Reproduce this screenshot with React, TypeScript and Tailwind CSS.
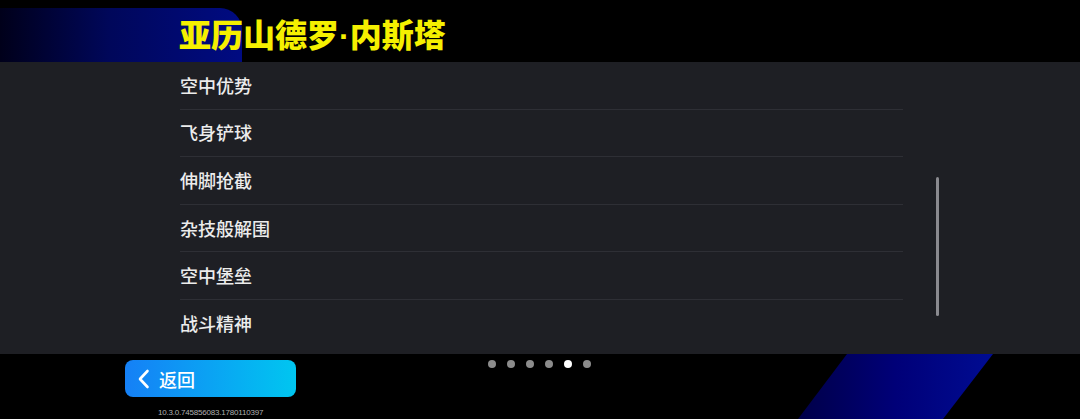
import React from "react";

const items = ["空中优势", "飞身铲球", "伸脚抢截", "杂技般解围", "空中堡垒", "战斗精神"];

export default function App() {
  return (
    <div
      className="relative w-[1080px] h-[419px] overflow-hidden bg-black flex flex-col"
      style={{ fontFamily: '"Noto Sans CJK SC", "Noto Sans", sans-serif' }}
    >
      {/* header */}
      <div className="relative h-[62px] shrink-0">
        <div className="absolute left-0 top-[8px] w-[242px] h-[54px] rounded-tr-[22px] bg-[linear-gradient(to_right,#00001a,#00075a_45%,#000b82)]" />
        <div className="relative pl-[179px] pt-[13px] text-[32px] leading-[40px] font-black text-[#f5f000]">
          亚历山德罗
          <span className="font-bold" style={{ fontFamily: '"Liberation Sans", sans-serif' }}>
            ·
          </span>
          内斯塔
        </div>
      </div>

      {/* panel */}
      <div className="relative h-[292px] shrink-0 bg-[#1e1f24] z-10">
        <div className="flex flex-col w-[723px] ml-[180px]">
          {items.map((t, i) => (
            <div
              key={t}
              className={
                "h-[47.6px] flex items-center text-[18px] font-medium text-[#ececec] " +
                (i < items.length - 1 ? "border-b border-[#2e2f35]" : "")
              }
            >
              {t}
            </div>
          ))}
        </div>
        <div className="absolute left-[936px] top-[115px] w-[3px] h-[139px] rounded-full bg-[#8a8a8f]" />
      </div>

      {/* bottom */}
      <div className="relative flex-1">
        <div
          className="absolute left-[798px] top-0 w-[195px] h-[65px] bg-[linear-gradient(to_right,#000048,#000078_50%,#000c92)]"
          style={{ clipPath: "polygon(49px 0, 195px 0, 145px 100%, 0 100%)" }}
        />
        <div className="relative flex items-center gap-[11px] pl-[488px] pt-[6px]">
          {[0, 1, 2, 3, 4, 5].map((i) => (
            <div
              key={i}
              className={"w-[8px] h-[8px] rounded-full " + (i === 4 ? "bg-white" : "bg-[#8c8c8c]")}
            />
          ))}
        </div>
        <div className="absolute left-[125px] top-[6px] w-[171px] h-[37px] rounded-[8px] bg-[linear-gradient(to_right,#1580f6,#00c6f0)] flex items-center pl-[12px] gap-[9px]">
          <svg width="13" height="20" viewBox="0 0 13 20" fill="none">
            <path d="M10.5 2 L3 10 L10.5 18" stroke="white" strokeWidth="2.6" strokeLinecap="round" strokeLinejoin="round" />
          </svg>
          <span className="text-[18px] font-medium text-white leading-none">返回</span>
        </div>
        <div
          className="absolute left-[158px] top-[54px] text-[8px] leading-[10px] text-[#b0b0b0] tracking-[-0.2px]"
          style={{ fontFamily: '"Liberation Sans", sans-serif' }}
        >
          10.3.0.745856083.1780110397
        </div>
      </div>
    </div>
  );
}
